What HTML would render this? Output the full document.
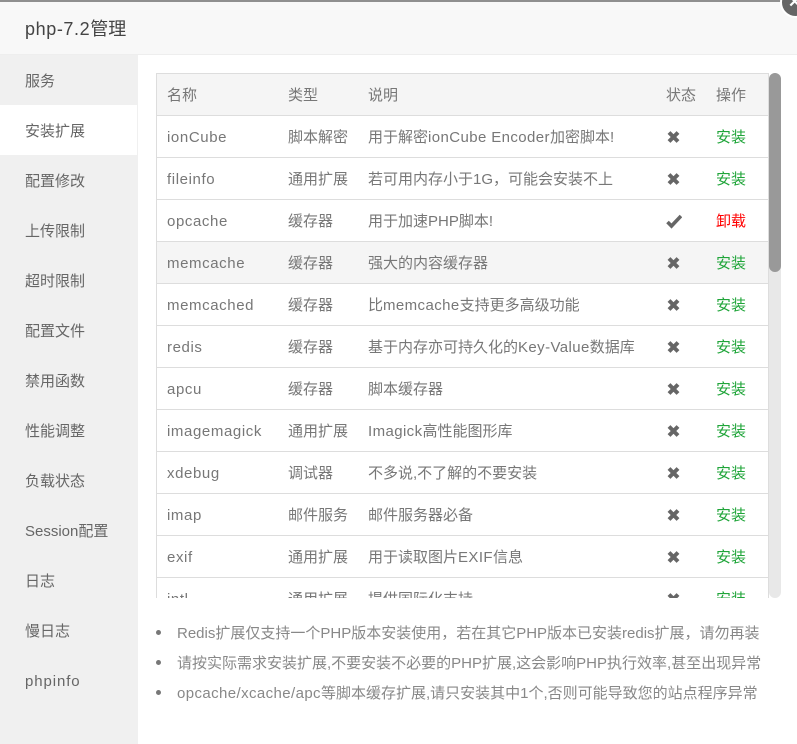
<!DOCTYPE html>
<html><head><meta charset="utf-8">
<style>
html,body{margin:0;padding:0;width:797px;height:744px;overflow:hidden;background:#fff}
body{position:relative;font-family:"Liberation Sans","Noto Sans CJK SC",sans-serif;font-size:15px;color:#666}
div{position:absolute;box-sizing:border-box;white-space:nowrap}
span{letter-spacing:.4px}
.strip{left:0;top:0;width:797px;height:2px;background:#8f8f8f}
.title{left:0;top:2px;width:797px;height:53px;background:#f8f8f8;border-bottom:1px solid #eee;color:#444;font-size:18px;line-height:55px;padding-left:25px}
.title span{letter-spacing:.6px}
.side{left:0;top:55px;width:138px;height:689px;background:#f0f0f0}
.si{left:0;width:137px;height:50px;line-height:53px;padding-left:25px;color:#666;font-size:15px}
.si.on{background:#fff}
.clip{left:156px;top:73px;width:625px;height:525px;overflow:hidden}
.tbl{left:0;top:0;width:613px;height:600px;border:1px solid #ddd;border-bottom:0}
.row{left:0;width:611px;height:42px;border-bottom:1px solid #ddd;line-height:43px;color:#777}
.row div{top:0}
.c1{left:10px;letter-spacing:.6px}.c2{left:131px}.c3{left:211px}.c4{left:509px}.c5{left:559px}
.g{color:#20a53a}.r{color:#f00}
.thumb{left:613px;top:0;width:12px;height:525px;background:#e8e8e8;border-radius:6px}
.thumb i{display:block;position:absolute;left:0;top:0;width:12px;height:199px;background:#999;border-radius:6px}
.ni{left:177px;color:#888;font-size:15px;line-height:20px}
.dot{left:156px;width:5px;height:5px;border-radius:50%;background:#777}
svg{position:absolute;left:0;top:0}
</style></head><body>
<div class="strip"></div>
<div class="title"><span>php-7.2</span>管理</div>
<div style="left:780px;top:-13px;width:31px;height:31px;border-radius:50%;background:#666;border:2px solid #fff;color:#fff;font-size:16px;font-weight:bold;line-height:27px;padding-left:6px">✕</div>
<div class="side">
<div class="si" style="top:0">服务</div>
<div class="si on" style="top:50px">安装扩展</div>
<div class="si" style="top:100px">配置修改</div>
<div class="si" style="top:150px">上传限制</div>
<div class="si" style="top:200px">超时限制</div>
<div class="si" style="top:250px">配置文件</div>
<div class="si" style="top:300px">禁用函数</div>
<div class="si" style="top:350px">性能调整</div>
<div class="si" style="top:400px">负载状态</div>
<div class="si" style="top:450px">Session配置</div>
<div class="si" style="top:500px">日志</div>
<div class="si" style="top:550px">慢日志</div>
<div class="si" style="top:600px;letter-spacing:.9px">phpinfo</div>
</div>
<div class="clip">
<div class="tbl">
<div class="row" style="top:0;background:#f5f5f5;color:#777"><div class="c1" style="letter-spacing:0">名称</div><div class="c2">类型</div><div class="c3">说明</div><div class="c4">状态</div><div class="c5">操作</div></div>
<div class="row" style="top:42px"><div class="c1">ionCube</div><div class="c2">脚本解密</div><div class="c3">用于解密<span>ionCube Encoder</span>加密脚本!</div><div class="c4"><svg width="16" height="41"><path d="M3 16.5l9 9M12 16.5l-9 9" stroke="#666" stroke-width="4" fill="none"/></svg></div><div class="c5 g">安装</div></div>
<div class="row" style="top:84px"><div class="c1">fileinfo</div><div class="c2">通用扩展</div><div class="c3">若可用内存小于1G，可能会安装不上</div><div class="c4"><svg width="16" height="41"><path d="M3 16.5l9 9M12 16.5l-9 9" stroke="#666" stroke-width="4" fill="none"/></svg></div><div class="c5 g">安装</div></div>
<div class="row" style="top:126px"><div class="c1">opcache</div><div class="c2">缓存器</div><div class="c3">用于加速PHP脚本!</div><div class="c4"><svg width="16" height="41"><path d="M1.5 22l4 4 9.5-10" stroke="#666" stroke-width="3.6" fill="none"/></svg></div><div class="c5 r">卸载</div></div>
<div class="row" style="top:168px;background:#f5f5f5"><div class="c1">memcache</div><div class="c2">缓存器</div><div class="c3">强大的内容缓存器</div><div class="c4"><svg width="16" height="41"><path d="M3 16.5l9 9M12 16.5l-9 9" stroke="#666" stroke-width="4" fill="none"/></svg></div><div class="c5 g">安装</div></div>
<div class="row" style="top:210px"><div class="c1">memcached</div><div class="c2">缓存器</div><div class="c3">比<span>memcache</span>支持更多高级功能</div><div class="c4"><svg width="16" height="41"><path d="M3 16.5l9 9M12 16.5l-9 9" stroke="#666" stroke-width="4" fill="none"/></svg></div><div class="c5 g">安装</div></div>
<div class="row" style="top:252px"><div class="c1">redis</div><div class="c2">缓存器</div><div class="c3">基于内存亦可持久化的<span>Key-Value</span>数据库</div><div class="c4"><svg width="16" height="41"><path d="M3 16.5l9 9M12 16.5l-9 9" stroke="#666" stroke-width="4" fill="none"/></svg></div><div class="c5 g">安装</div></div>
<div class="row" style="top:294px"><div class="c1">apcu</div><div class="c2">缓存器</div><div class="c3">脚本缓存器</div><div class="c4"><svg width="16" height="41"><path d="M3 16.5l9 9M12 16.5l-9 9" stroke="#666" stroke-width="4" fill="none"/></svg></div><div class="c5 g">安装</div></div>
<div class="row" style="top:336px"><div class="c1">imagemagick</div><div class="c2">通用扩展</div><div class="c3"><span>Imagick</span>高性能图形库</div><div class="c4"><svg width="16" height="41"><path d="M3 16.5l9 9M12 16.5l-9 9" stroke="#666" stroke-width="4" fill="none"/></svg></div><div class="c5 g">安装</div></div>
<div class="row" style="top:378px"><div class="c1">xdebug</div><div class="c2">调试器</div><div class="c3">不多说,不了解的不要安装</div><div class="c4"><svg width="16" height="41"><path d="M3 16.5l9 9M12 16.5l-9 9" stroke="#666" stroke-width="4" fill="none"/></svg></div><div class="c5 g">安装</div></div>
<div class="row" style="top:420px"><div class="c1">imap</div><div class="c2">邮件服务</div><div class="c3">邮件服务器必备</div><div class="c4"><svg width="16" height="41"><path d="M3 16.5l9 9M12 16.5l-9 9" stroke="#666" stroke-width="4" fill="none"/></svg></div><div class="c5 g">安装</div></div>
<div class="row" style="top:462px"><div class="c1">exif</div><div class="c2">通用扩展</div><div class="c3">用于读取图片<span>EXIF</span>信息</div><div class="c4"><svg width="16" height="41"><path d="M3 16.5l9 9M12 16.5l-9 9" stroke="#666" stroke-width="4" fill="none"/></svg></div><div class="c5 g">安装</div></div>
<div class="row" style="top:504px"><div class="c1">intl</div><div class="c2">通用扩展</div><div class="c3">提供国际化支持</div><div class="c4"><svg width="16" height="41"><path d="M3 16.5l9 9M12 16.5l-9 9" stroke="#666" stroke-width="4" fill="none"/></svg></div><div class="c5 g">安装</div></div>
</div>
<div class="thumb"><i></i></div>
</div>
<div class="dot" style="top:630px"></div>
<div class="ni" style="top:624px">Redis扩展仅支持一个PHP版本安装使用，若在其它PHP版本已安装redis扩展，请勿再装</div>
<div class="dot" style="top:660px"></div>
<div class="ni" style="top:654px">请按实际需求安装扩展,不要安装不必要的PHP扩展,这会影响PHP执行效率,甚至出现异常</div>
<div class="dot" style="top:690px"></div>
<div class="ni" style="top:684px"><span>opcache/xcache/apc</span>等脚本缓存扩展,请只安装其中1个,否则可能导致您的站点程序异常</div>
</body></html>
